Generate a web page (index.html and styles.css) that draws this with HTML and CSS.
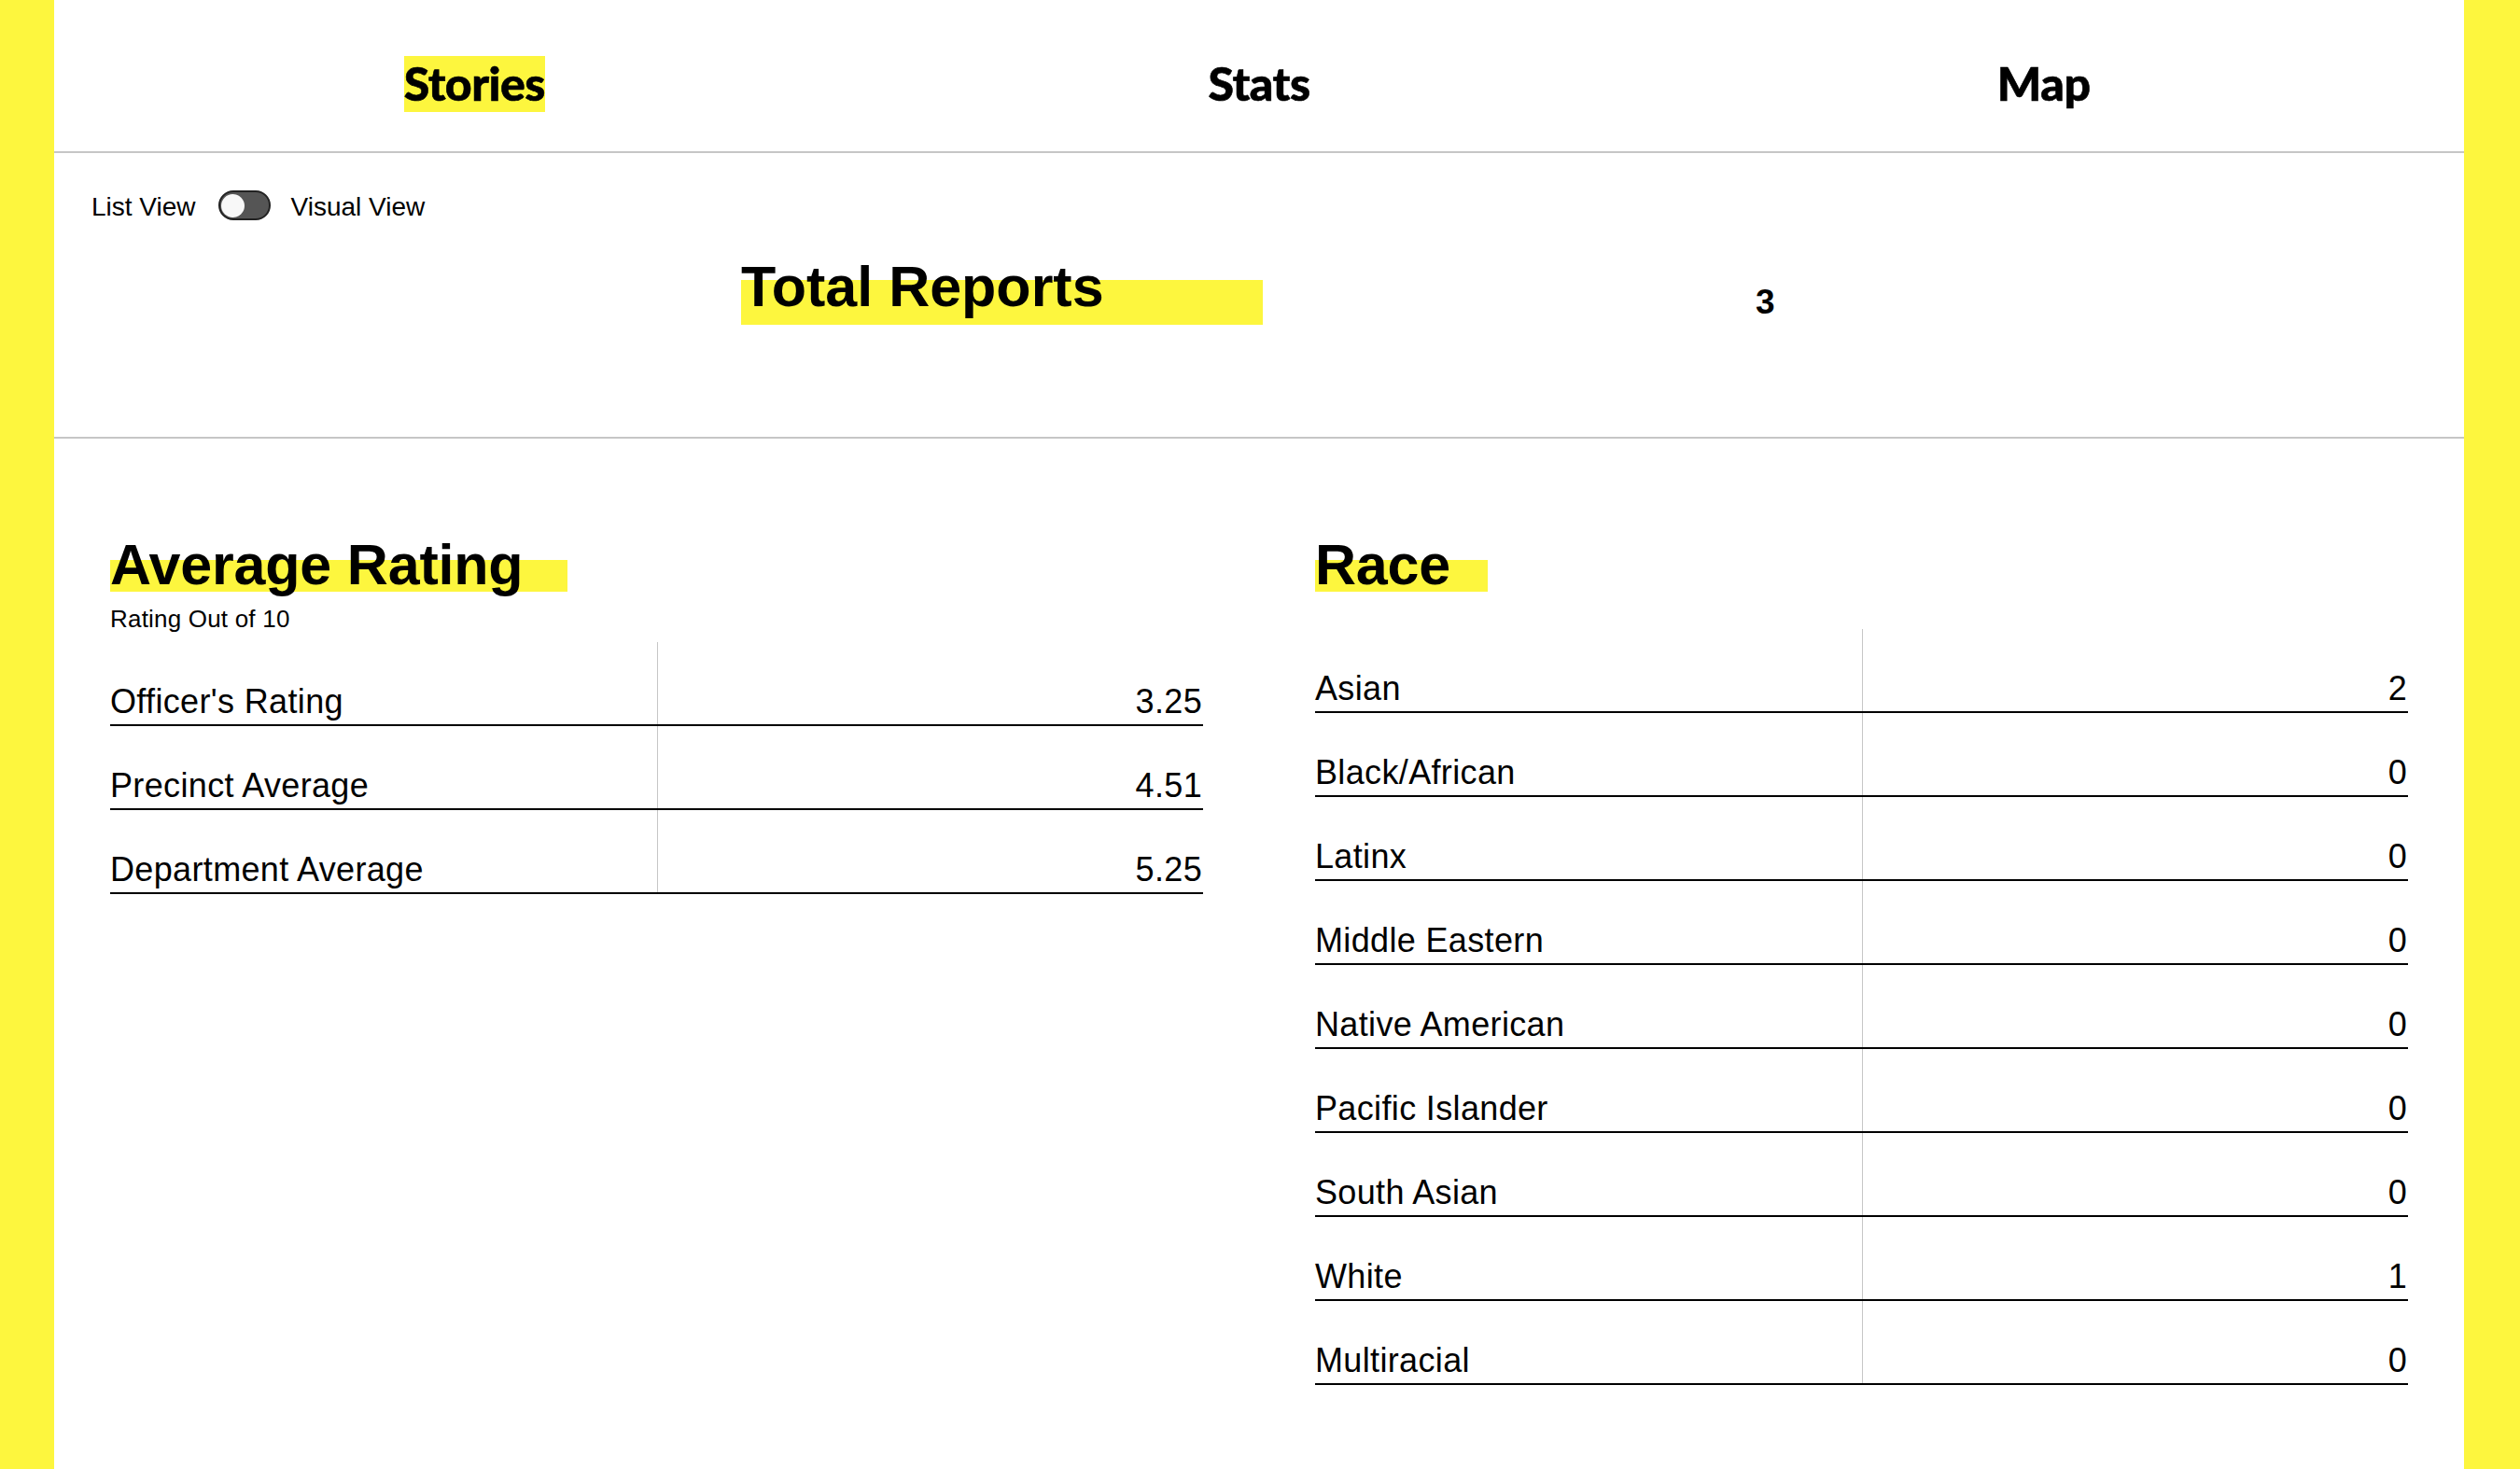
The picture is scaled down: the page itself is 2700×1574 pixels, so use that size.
FILE: index.html
```html
<!DOCTYPE html>
<html lang="en">
<head>
<meta charset="utf-8">
<title>Stats</title>
<link rel="stylesheet" href="styles.css">
</head>
<body>
<div class="page">
  <nav class="nav">
    <div class="nav-item"><span class="nav-link nav-link--active">Stories</span></div>
    <div class="nav-item"><span class="nav-link">Stats</span></div>
    <div class="nav-item"><span class="nav-link">Map</span></div>
  </nav>

  <section class="summary">
    <div class="view-toggle">
      <span class="toggle-label">List View</span>
      <span class="switch"><span class="switch-knob"></span></span>
      <span class="toggle-label">Visual View</span>
    </div>
    <div class="total-row">
      <div class="total-label-cell"><h1 class="total-title">Total Reports</h1></div>
      <div class="total-value">3</div>
    </div>
  </section>

  <section class="stats">
    <div class="stat-col">
      <h2 class="section-title section-title--rating">Average Rating</h2>
      <p class="section-sub">Rating Out of 10</p>
      <div class="stat-table">
        <div class="stat-row"><div class="cell">Officer's Rating</div><div class="cell cell--value">3.25</div></div>
        <div class="stat-row"><div class="cell">Precinct Average</div><div class="cell cell--value">4.51</div></div>
        <div class="stat-row"><div class="cell">Department Average</div><div class="cell cell--value">5.25</div></div>
      </div>
    </div>
    <div class="stat-col">
      <h2 class="section-title section-title--race">Race</h2>
      <div class="stat-table">
        <div class="stat-row"><div class="cell">Asian</div><div class="cell cell--value">2</div></div>
        <div class="stat-row"><div class="cell">Black/African</div><div class="cell cell--value">0</div></div>
        <div class="stat-row"><div class="cell">Latinx</div><div class="cell cell--value">0</div></div>
        <div class="stat-row"><div class="cell">Middle Eastern</div><div class="cell cell--value">0</div></div>
        <div class="stat-row"><div class="cell">Native American</div><div class="cell cell--value">0</div></div>
        <div class="stat-row"><div class="cell">Pacific Islander</div><div class="cell cell--value">0</div></div>
        <div class="stat-row"><div class="cell">South Asian</div><div class="cell cell--value">0</div></div>
        <div class="stat-row"><div class="cell">White</div><div class="cell cell--value">1</div></div>
        <div class="stat-row"><div class="cell">Multiracial</div><div class="cell cell--value">0</div></div>
      </div>
    </div>
  </section>
</div>
</body>
</html>
```

FILE: styles.css
```css
* { box-sizing: border-box; }

html, body {
  margin: 0;
  padding: 0;
}

body {
  background: #fdf63e;
  padding: 0 60px 0 58px;
  font-family: "Liberation Sans", Arial, Helvetica, sans-serif;
  color: #000;
}

.page {
  background: #fff;
  min-height: 100vh;
}

/* ---------- top navigation ---------- */
.nav {
  display: grid;
  grid-template-columns: repeat(3, 1fr);
  padding: 60px 30px 42px;
  border-bottom: 2px solid #c6c6c6;
}

.nav-item {
  text-align: center;
  height: 60px;
}

.nav-link {
  display: inline-block;
  font-family: Lato, "Noto Sans", sans-serif;
  font-weight: 900;
  font-size: 50px;
  line-height: 58px;
  padding-bottom: 2px;
  letter-spacing: -0.5px;
  -webkit-text-stroke: 0.6px #000;
}

.nav-link--active {
  background: #fdf63e;
}

/* ---------- summary ---------- */
.summary {
  border-bottom: 2px solid #c6c6c6;
  padding-bottom: 120px;
}

.view-toggle {
  display: flex;
  align-items: center;
  height: 32px;
  margin-top: 40px;
  padding-left: 40px;
}

.toggle-label {
  font-size: 28px;
  line-height: 32px;
  padding-top: 4px;
}

.switch {
  display: flex;
  align-items: center;
  width: 56px;
  height: 32px;
  margin: 0 22px 0 24px;
  padding: 0 1px;
  border: 2.5px solid #222;
  border-radius: 16px;
  background: #555;
}

.switch-knob {
  width: 25px;
  height: 25px;
  border-radius: 50%;
  background: #f8f8f8;
}

.total-row {
  display: grid;
  grid-template-columns: 1295px 1fr;
  margin-top: 38px;
}

.total-label-cell {
  display: flex;
  justify-content: flex-end;
}

.total-title {
  margin: 0;
  width: 559px;
  height: 74px;
  padding-top: 3px;
  font-size: 61px;
  line-height: 60px;
  font-weight: 700;
  background: linear-gradient(to bottom, transparent 26px, #fdf63e 26px);
}

.total-value {
  padding-left: 528px;
  margin-top: 31px;
  font-size: 37px;
  line-height: 37px;
  font-weight: 700;
}

/* ---------- stats tables ---------- */
.stats {
  display: grid;
  grid-template-columns: 1fr 1fr;
  column-gap: 120px;
  padding: 105px 60px 60px;
}

.section-title {
  margin: 0 0 13px;
  width: fit-content;
  font-size: 61px;
  line-height: 60px;
  font-weight: 700;
  letter-spacing: -0.2px;
  background: linear-gradient(to bottom, transparent 25px, #fdf63e 25px, #fdf63e 59px, transparent 59px);
}

.section-title--rating { padding-right: 48px; }

.section-title--race {
  padding-right: 40px;
  margin-bottom: 39px;
}

.section-sub {
  margin: 0 0 10px;
  font-size: 26px;
  line-height: 30px;
  letter-spacing: 0.2px;
}

.stat-row {
  display: grid;
  grid-template-columns: 1fr 1fr;
  height: 90px;
  border-bottom: 2px solid #000;
}

.cell {
  display: flex;
  align-items: flex-end;
  padding-bottom: 6px;
  font-size: 36px;
  line-height: 36px;
  letter-spacing: 0.35px;
}

.cell--value {
  justify-content: flex-end;
  border-left: 1px solid #c6c6c6;
  padding-right: 1px;
}
```
